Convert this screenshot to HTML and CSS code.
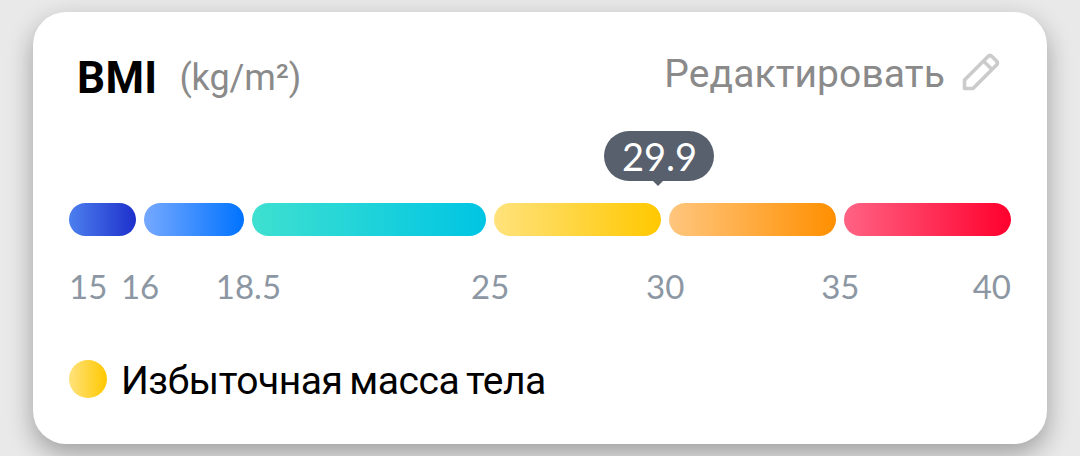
FILE: index.html
```html
<!DOCTYPE html>
<html lang="ru">
<head>
    <meta charset="UTF-8">
    <meta name="viewport" content="width=device-width, initial-scale=1.0">
    <title>BMI</title>
    <link rel="stylesheet" href="styles.css">
</head>
<body>
    <div class="card">
        <div class="header">
            <h1 class="title">BMI</h1>
            <span class="unit">(kg/m²)</span>
            <div class="edit">
                <span class="edit-text">Редактировать</span>
                <svg class="edit-icon" viewBox="0 0 40 40" fill="none" stroke="#cbcbcb" stroke-width="3.6" stroke-linejoin="round">
                    <path d="M3.5 36.5V28L27 4.5Q29 2.5 31 4.5L35.5 9Q37.5 11 35.5 13L12 36.5Z"/>
                    <path d="M22.5 9L31 17.5"/>
                </svg>
            </div>
        </div>

        <div class="scale">
            <div class="bar severe"></div>
            <div class="bar under"></div>
            <div class="bar normal"></div>
            <div class="bar over">
                <div class="value">29.9</div>
            </div>
            <div class="bar obese"></div>
            <div class="bar obese2"></div>
        </div>

        <div class="scale labels">
            <span class="label first">15</span>
            <span class="label">16</span>
            <span class="label">18.5</span>
            <span class="label">25</span>
            <span class="label">30</span>
            <span class="label col6">35</span>
            <span class="label col6 last">40</span>
        </div>

        <div class="result">
            <span class="dot over"></span>
            <span class="result-text">Избыточная масса тела</span>
        </div>
    </div>
</body>
</html>
```
FILE: styles.css
```css
* {box-sizing: border-box;}
body {margin: 0; height: 456px; padding: 12px 33px; background: #e9e9e9; font-family: Roboto, "Liberation Sans", sans-serif; overflow: hidden;}

.card {height: 432px; padding: 35px 36px 0; border-radius: 33px; background: #fff; box-shadow: 0 10px 26px rgba(0, 0, 0, 0.32);}

.header {display: flex; align-items: center; height: 60px; padding: 0 10px 0 8px;}
.title {margin: 0; padding-top: 1px; font-size: 44px; font-weight: 700; line-height: 60px; letter-spacing: 0.3px; color: #000;}
.unit {margin-left: 22px; padding-top: 2px; font-size: 36px; line-height: 60px; letter-spacing: -0.1px; color: #8a8a8a;}
.edit {display: flex; align-items: center; margin-left: auto; gap: 16px; padding-bottom: 6px;}
.edit-text {font-size: 39px; line-height: 50px; letter-spacing: 0.1px; color: #8a8a8a;}
.edit-icon {width: 40px; height: 40px; margin-top: -5px;}

.scale {display: grid; grid-template-columns: minmax(0, 2fr) minmax(0, 3fr) minmax(0, 7fr) minmax(0, 5fr) minmax(0, 5fr) minmax(0, 5fr); column-gap: 8.4px; margin-top: 96px;}
.bar {position: relative; height: 33.4px; border-radius: 17px;}
.severe {background: linear-gradient(90deg, #4c7fee, #1e30cb);}
.under {background: linear-gradient(90deg, #76a8ff, #0073ff);}
.normal {background: linear-gradient(90deg, #3ee0d0, #00c5e3);}
.over {background: linear-gradient(90deg, #ffe27c, #ffc800);}
.obese {background: linear-gradient(90deg, #ffc67e, #ff8f00);}
.obese2 {background: linear-gradient(90deg, #ff6384, #ff002d);}

.value {position: absolute; left: 98.6%; bottom: 55px; width: 110px; height: 50px; margin-left: -55px; border-radius: 25px; background: #58606d; color: #fff; font-family: Lato, sans-serif; font-size: 38px; line-height: 51px; text-align: center; text-indent: 2px;}
.value::after {content: ""; position: absolute; left: 48px; top: 49px; border: 6.5px solid transparent; border-top-color: #58606d; border-bottom: 0;}

.labels {margin-top: 29px; font-family: Lato, sans-serif; font-size: 33px; line-height: 42px; color: #8c97a3;}
.label {grid-row: 1; justify-self: start; margin-left: -4px; transform: translateX(-50%);}
.first {margin-left: 0; transform: none;}
.col6 {grid-column: 6;}
.last {justify-self: end; transform: none;}

.result {display: flex; align-items: center; margin-top: 49px; gap: 14px;}
.dot {width: 38px; height: 38px; margin-bottom: 2px; border-radius: 50%;}
.result-text {padding-top: 3px; font-size: 39px; line-height: 44px; letter-spacing: -0.45px; word-spacing: -2.5px; color: #000;}
```
